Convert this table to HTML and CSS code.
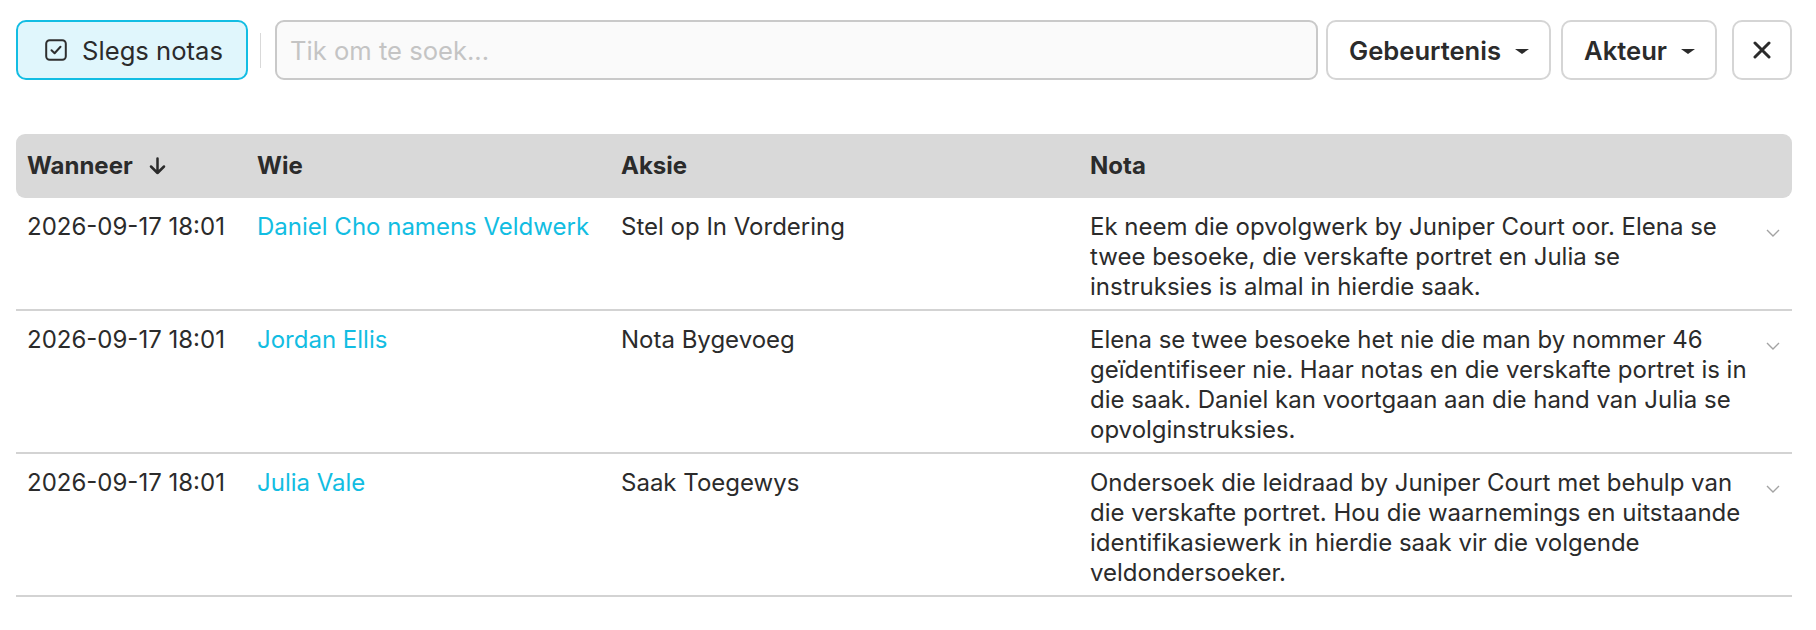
FILE: index.html
```html
<!DOCTYPE html>
<html>
<head>
<meta charset="utf-8">
<link rel="stylesheet" href="styles.css">
</head>
<body>
<div class="page">
  <div class="toolbar">
    <button class="btn-toggle">
      <svg class="check-ico" viewBox="0 0 22 22" width="22" height="22"><rect x="1.2" y="1.2" width="19.6" height="19.6" rx="3.5" fill="none" stroke="#2f2f2f" stroke-width="2"/><path d="M6.5 11.2 L9.6 14.2 L15.5 7.8" fill="none" stroke="#2f2f2f" stroke-width="2" stroke-linecap="round" stroke-linejoin="round"/></svg>
      <span>Slegs notas</span>
    </button>
    <div class="sep"></div>
    <div class="search">Tik om te soek...</div>
    <button class="btn-drop">Gebeurtenis <span class="caret"></span></button>
    <button class="btn-drop">Akteur <span class="caret"></span></button>
    <button class="btn-x">
      <svg viewBox="0 0 18 18" width="18" height="18"><path d="M2 2 L16 16 M16 2 L2 16" stroke="#2b2b2b" stroke-width="3" stroke-linecap="round"/></svg>
    </button>
  </div>

  <div class="table">
    <div class="row head">
      <div class="cell">Wanneer <svg class="sort" viewBox="0 0 17 18" width="17" height="18"><path d="M8.5 1.5 V16 M2 9.5 L8.5 16 L15 9.5" fill="none" stroke="#2b2b2b" stroke-width="2.5" stroke-linecap="round" stroke-linejoin="round"/></svg></div>
      <div class="cell">Wie</div>
      <div class="cell">Aksie</div>
      <div class="cell">Nota</div>
    </div>

    <div class="row">
      <div class="cell">2026-09-17 18:01</div>
      <div class="cell"><a class="who">Daniel Cho namens Veldwerk</a></div>
      <div class="cell">Stel op In Vordering</div>
      <div class="cell note">
        <div class="note-text">Ek neem die opvolgwerk by Juniper Court oor. Elena se twee besoeke, die verskafte portret en Julia se instruksies is almal in hierdie saak.</div>
        <svg class="chev" viewBox="0 0 14 8" width="14" height="8"><path d="M1 1 L7 7 L13 1" fill="none" stroke="#a3a3a3" stroke-width="1.4"/></svg>
      </div>
    </div>

    <div class="row">
      <div class="cell">2026-09-17 18:01</div>
      <div class="cell"><a class="who">Jordan Ellis</a></div>
      <div class="cell">Nota Bygevoeg</div>
      <div class="cell note">
        <div class="note-text">Elena se twee besoeke het nie die man by nommer 46 geïdentifiseer nie. Haar notas en die verskafte portret is in die saak. Daniel kan voortgaan aan die hand van Julia se opvolginstruksies.</div>
        <svg class="chev" viewBox="0 0 14 8" width="14" height="8"><path d="M1 1 L7 7 L13 1" fill="none" stroke="#a3a3a3" stroke-width="1.4"/></svg>
      </div>
    </div>

    <div class="row">
      <div class="cell">2026-09-17 18:01</div>
      <div class="cell"><a class="who">Julia Vale</a></div>
      <div class="cell">Saak Toegewys</div>
      <div class="cell note">
        <div class="note-text">Ondersoek die leidraad by Juniper Court met behulp van die verskafte portret. Hou die waarnemings en uitstaande identifikasiewerk in hierdie saak vir die volgende veldondersoeker.</div>
        <svg class="chev" viewBox="0 0 14 8" width="14" height="8"><path d="M1 1 L7 7 L13 1" fill="none" stroke="#a3a3a3" stroke-width="1.4"/></svg>
      </div>
    </div>
  </div>
</div>
</body>
</html>
```

FILE: styles.css
```css
* { box-sizing: border-box; }
html, body { margin: 0; padding: 0; background: #ffffff; }
body {
  font-family: Inter, "Noto Sans", sans-serif;
  color: #2b2b2b;
  font-size: 24px;
}
.page {
  padding: 20px 24px 0 16px;
}
.toolbar {
  display: flex;
  align-items: center;
  height: 60px;
  font-size: 25.6px;
}
button {
  font-family: inherit;
  font-size: inherit;
  color: #2b2b2b;
  cursor: pointer;
}
.btn-toggle {
  height: 60px;
  width: 232px;
  display: flex;
  align-items: center;
  justify-content: center;
  gap: 15px;
  background: #e0f6fc;
  border: 2px solid #13bde3;
  border-radius: 10px;
  font-weight: 400;
  padding: 0 0 0 4px;
}
.check-ico { display: block; }
.sep {
  width: 1px;
  height: 35px;
  background: #d9d9d9;
  margin: 0 14px 0 12px;
}
.search {
  flex: 1;
  height: 60px;
  display: flex;
  align-items: center;
  padding-left: 13px;
  background: #fafafa;
  border: 2px solid #c9c9c9;
  border-radius: 9px;
  color: #c4c4c4;
}
.btn-drop {
  height: 60px;
  margin-left: 8px;
  display: flex;
  align-items: center;
  gap: 14px;
  padding: 0 20px 0 21px;
  background: #fff;
  border: 2px solid #d5d5d5;
  border-radius: 10px;
  font-weight: 600;
}
.btn-drop + .btn-drop { margin-left: 10px; }
.caret {
  width: 0;
  height: 0;
  border-left: 7px solid transparent;
  border-right: 7px solid transparent;
  border-top: 5px solid #2b2b2b;
  margin-top: 3px;
}
.btn-x {
  width: 60px;
  height: 60px;
  margin-left: 15px;
  display: flex;
  align-items: center;
  justify-content: center;
  background: #fff;
  border: 2px solid #d5d5d5;
  border-radius: 10px;
  padding: 0;
}
.btn-x svg { display: block; }

.table {
  margin-top: 54px;
}
.row {
  display: grid;
  grid-template-columns: 230px 364px 469px 1fr;
  border-bottom: 2px solid #d3d3d3;
  padding: 14px 0 7px;
  line-height: 30px;
}
.row.head {
  height: 64px;
  padding: 0;
  border-bottom: none;
  background: #d9d9d9;
  border-radius: 9px;
  align-items: center;
  font-weight: 700;
}
.cell {
  padding: 0 11px;
}
.head .cell {
  display: flex;
  align-items: center;
  gap: 16px;
}
.sort { display: block; }
.who {
  color: #12bde2;
  text-decoration: none;
}
.note {
  display: flex;
  align-items: flex-start;
  gap: 19px;
  padding-right: 12px;
}
.note-text { flex: 1; }
.chev {
  display: block;
  flex: none;
  margin-top: 17px;
}
```
